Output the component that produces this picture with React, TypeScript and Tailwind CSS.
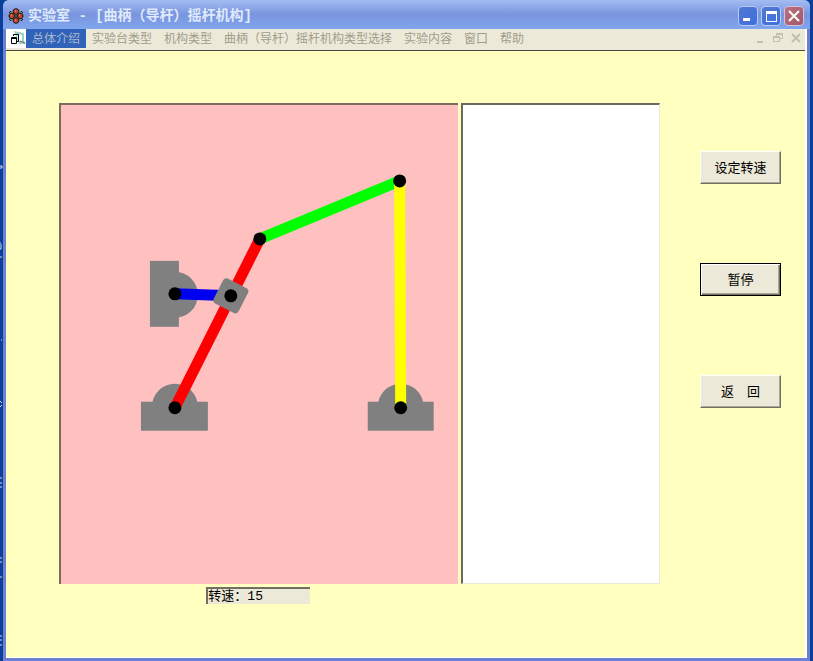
import { useState } from "react";
import type { ReactNode } from "react";

const MENU_ITEMS = [
  "总体介绍",
  "实验台类型",
  "机构类型",
  "曲柄（导杆）摇杆机构类型选择",
  "实验内容",
  "窗口",
  "帮助",
];

const LINKS = [
  { id: "coupler", x1: 199, y1: 134, x2: 339, y2: 76, color: "#00ff00" },
  { id: "rocker", x1: 339, y1: 76, x2: 340, y2: 303, color: "#ffff00" },
  { id: "guide", x1: 114, y1: 303, x2: 199, y2: 134, color: "#ff0000" },
  { id: "crank", x1: 114, y1: 189, x2: 170, y2: 191, color: "#0000f0" },
];

const JOINTS = [
  { x: 114, y: 303 },
  { x: 114, y: 189 },
  { x: 170, y: 191 },
  { x: 199, y: 134 },
  { x: 339, y: 76 },
  { x: 340, y: 303 },
];

function AppIcon() {
  return (
    <svg viewBox="0 0 16 16" className="size-4 shrink-0" aria-hidden="true">
      <path d="M3 3h10l3 5-3 5H3L0 8z" fill="#5d8f98" />
      <g fill="#c4452f" stroke="#2a1712">
        <circle cx="8" cy="3.5" r="2.8" />
        <circle cx="3.8" cy="8" r="2.8" />
        <circle cx="12.2" cy="8" r="2.8" />
        <circle cx="8" cy="12.5" r="2.8" />
      </g>
      <path d="M1 5l2-2M15 5l-2-2M1 11l2 2M15 11l-2 2M6 8h4" stroke="#2a1712" />
      <path d="M7 3h1M3 7h1M11 7h1M7 12h1" stroke="#f0a088" />
    </svg>
  );
}

function ChildWindowIcon() {
  return (
    <svg viewBox="0 0 20 19" className="h-[19px] w-5 shrink-0 bg-white" aria-hidden="true">
      <path d="M8 2l10 2v8l2 3h-7l-1-2z" fill="#a3cfc9" />
      <path d="M11 5l5 1v6h-4z" fill="#fff" />
      <path d="M7.5 7V5.500h5v7H11M5.500 8.500h5v6h-5zM5 9.500h6" fill="none" stroke="#000" />
      <path d="M14 12l5 2" stroke="#607070" />
    </svg>
  );
}

interface IconButtonProps {
  label: string;
  className: string;
  children: ReactNode;
}

function IconButton({ label, className, children }: IconButtonProps) {
  return (
    <button type="button" aria-label={label} className={className}>
      {children}
    </button>
  );
}

function TitleBar() {
  const blue =
    "flex size-5 items-center justify-center rounded-sm border border-[#b9cbf5] bg-linear-to-br from-[#5078d0] to-[#3f6fe0]";
  const red =
    "flex size-5 items-center justify-center rounded-sm border border-[#d3c3dc] bg-linear-to-br from-[#b8737f] to-[#a4566a]";

  return (
    <header className="flex h-[29px] items-center rounded-t-md bg-linear-to-b from-[#a3bdf2] via-[#7a94de] to-[#7fa6ee] pt-0.5 pr-1.5 pl-[5px]">
      <AppIcon />
      <h1 className="ml-1 flex-1 truncate font-['Liberation_Mono','Noto_Sans_CJK_SC',monospace] text-sm font-bold text-[#dfeafc]">
        实验室 - [曲柄（导杆）摇杆机构]
      </h1>
      <div className="flex gap-[3px]">
        <IconButton label="最小化" className={blue}>
          <svg viewBox="0 0 18 18" className="size-full">
            <path d="M4 11h7v3H4z" fill="#fff" />
          </svg>
        </IconButton>
        <IconButton label="最大化" className={blue}>
          <svg viewBox="0 0 18 18" className="size-full">
            <path d="M4 4h11v11H4zM5 7v7h9V7z" fill="#fff" fillRule="evenodd" />
          </svg>
        </IconButton>
        <IconButton label="关闭" className={red}>
          <svg viewBox="0 0 18 18" className="size-full">
            <path d="M4 4l10 10M14 4L4 14" stroke="#fff" strokeWidth="2" />
          </svg>
        </IconButton>
      </div>
    </header>
  );
}

function MenuBar() {
  const [active, setActive] = useState(MENU_ITEMS[0]);
  const control = "flex h-4 w-[18px] items-center justify-center text-[#c2bfae]";

  return (
    <nav className="flex h-[21px] items-start bg-[#ece9d8] text-xs">
      <ChildWindowIcon />
      {MENU_ITEMS.map((item) => (
        <button
          key={item}
          type="button"
          onClick={() => setActive(item)}
          className={
            item === active
              ? "h-[19px] bg-[#2f62b8] px-1.5 whitespace-nowrap text-[#a9b9d0]"
              : "h-[19px] px-1.5 whitespace-nowrap text-[#a19d8c]"
          }
        >
          {item}
        </button>
      ))}
      <div className="ml-auto flex pt-px">
        <IconButton label="最小化子窗口" className={control}>
          <svg viewBox="0 0 12 12" className="size-3">
            <path d="M3 10h6" stroke="currentColor" strokeWidth="2" />
          </svg>
        </IconButton>
        <IconButton label="还原子窗口" className={control}>
          <svg viewBox="0 0 12 12" className="size-3" fill="none" stroke="currentColor">
            <path d="M4.5 4V1.5h6v5H8M4 2.5h7M1.5 4.5h6v5h-6zM1 5.5h7" />
          </svg>
        </IconButton>
        <IconButton label="关闭子窗口" className={control}>
          <svg viewBox="0 0 12 12" className="size-3">
            <path d="M2 2l8 8M10 2l-8 8" stroke="currentColor" strokeWidth="2" />
          </svg>
        </IconButton>
      </div>
    </nav>
  );
}

function Mechanism() {
  return (
    <svg viewBox="0 0 397 479" className="block h-auto w-full" role="img" aria-label="曲柄（导杆）摇杆机构">
      {/* fixed supports */}
      <g fill="#808080">
        <rect x="80" y="297" width="67" height="29" />
        <circle cx="114" cy="302" r="23" />
        <rect x="307" y="297" width="66" height="29" />
        <circle cx="340" cy="302" r="23" />
        <rect x="89" y="156" width="29" height="66" />
        <circle cx="114" cy="190" r="23" />
      </g>
      {LINKS.map((link) => (
        <line
          key={link.id}
          x1={link.x1}
          y1={link.y1}
          x2={link.x2}
          y2={link.y2}
          stroke={link.color}
          strokeWidth="11"
        />
      ))}
      {/* slider on the guide bar */}
      <rect x="156" y="177" width="28" height="28" rx="4" fill="#808080" transform="rotate(27 170 191)" />
      {JOINTS.map((joint) => (
        <circle key={`${joint.x}-${joint.y}`} cx={joint.x} cy={joint.y} r="6.5" />
      ))}
    </svg>
  );
}

export default function App() {
  const [speed] = useState(15);
  const [paused, setPaused] = useState(false);

  const raised =
    "h-[33px] border border-t-white border-l-white border-r-[#716f64] border-b-[#716f64] bg-[#ece9d8] shadow-[inset_-1px_-1px_0_#aca899]";
  const focused =
    "h-[33px] border border-black bg-[#ece9d8] shadow-[inset_1px_1px_0_#fff,inset_-1px_-1px_0_#716f64,inset_-2px_-2px_0_#aca899]";

  return (
    <div className="relative flex min-h-screen bg-[#0a3f9c] px-[3px] font-['Liberation_Sans','Noto_Sans_CJK_SC',sans-serif]">
      {/* slivers of the desktop labels behind the window */}
      <svg viewBox="0 0 3 661" className="absolute top-0 left-0 h-[661px] w-[3px]" aria-hidden="true">
        <path
          d="M0 166h2v2H0M1 243H0M1 244v5H0M0 257h2M1 340h1M0 401l2 2M0 407l2-2M0 478h2M0 483h2M0 487h2M0 558h2M0 562h2M0 577h2M0 636h2M0 640h2M0 645h2"
          fill="none"
          stroke="#cfe0ee"
        />
      </svg>

      <div className="flex min-w-0 flex-1 flex-col rounded-t-md bg-[#6d80cf]">
        <TitleBar />
        <div className="mx-[3px] mb-[3px] flex flex-1 flex-col border-r-2 border-b border-white">
          <MenuBar />
          <main className="flex flex-1 items-start gap-10 border-t border-[#4a4a44] bg-[#ffffc0] pt-[52px] pr-6 pb-10 pl-[53px] text-[13px]">
            <div className="grid min-w-0 flex-1 grid-cols-[2fr_1fr] gap-[3px]">
              <section className="border-t-2 border-l-2 border-[#7d6a60] bg-[#ffc0c0]">
                <Mechanism />
              </section>
              <section className="border-t-2 border-r border-b border-l-2 border-t-[#6b695e] border-r-[#ece9d8] border-b-[#ece9d8] border-l-[#6b695e] bg-white" />
              <output className="mx-auto h-[17px] w-[104px] border-t-2 border-l-2 border-[#716f64] bg-[#ece9d8] font-['Liberation_Mono','Noto_Sans_CJK_SC',monospace] leading-4 whitespace-nowrap">
                转速：{speed}
              </output>
            </div>

            <div className="mt-12 flex w-[81px] flex-col gap-[79px]">
              <button type="button" className={raised}>
                设定转速
              </button>
              <button type="button" aria-pressed={paused} onClick={() => setPaused(!paused)} className={focused}>
                暂停
              </button>
              <button type="button" className={raised}>
                返　回
              </button>
            </div>
          </main>
        </div>
      </div>
    </div>
  );
}
